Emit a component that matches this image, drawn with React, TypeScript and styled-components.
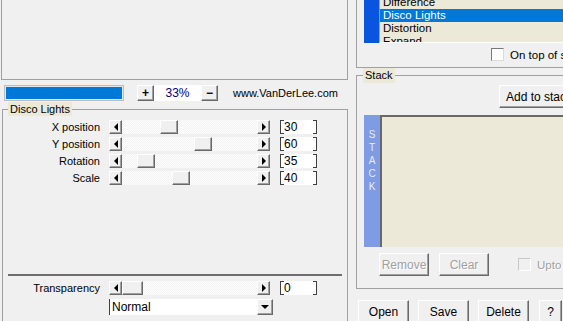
import React from 'react';
import styled, { createGlobalStyle, css } from 'styled-components';

// Windows classic palette
const colors = {
  face: '#f0f0f0',
  beige: '#ece9d8',
  line: '#a0a0a0',
  dark: '#696969',
  white: '#ffffff',
  select: '#0078d7',
  listBar: '#0a55e0',
  stackBar: '#7e9be3',
  disabled: '#a0a0a0',
  navy: '#000080'
};

const GlobalStyle = createGlobalStyle`
  html, body {
    margin: 0;
    padding: 0;
    background: ${colors.face};
    overflow: hidden;
  }
  body {
    font-family: 'Liberation Sans', Arial, sans-serif;
    font-size: 11px;
    color: #000;
  }
`;

const bevel = css`
  box-sizing: border-box;
  background: ${colors.face};
  border: 1px solid;
  border-color: ${colors.white} ${colors.dark} ${colors.dark} ${colors.white};
  box-shadow: inset -1px -1px 0 ${colors.line};
`;

const Window = styled.div`
  display: flex;
  align-items: flex-start;
  width: 620px;
  height: 321px;
  overflow: hidden;
`;

/* ---------- left side ---------- */

const LeftColumn = styled.div`
  display: flex;
  flex-direction: column;
  width: 348px;
  flex-shrink: 0;
  & > * {
    flex-shrink: 0;
  }
`;

const Preview = styled.div`
  box-sizing: border-box;
  width: 347px;
  height: 80px;
  margin-left: 1px;
  border: 1px solid ${colors.line};
  border-top: none;
`;

const Toolbar = styled.div`
  display: flex;
  align-items: center;
  height: 16px;
  margin-top: 5px;
`;

const Progress = styled.div`
  box-sizing: border-box;
  width: 120px;
  height: 16px;
  margin-left: 4px;
  padding: 1px;
  border: 1px solid #bcbcbc;
  background: #e6e6e6;
`;

const ProgressFill = styled.div`
  height: 100%;
  background: ${colors.select};
`;

const ZoomButton = styled.div<{ $gap?: number }>`
  ${bevel};
  width: 17px;
  height: 16px;
  margin-left: ${p => p.$gap ?? 0}px;
  display: flex;
  align-items: center;
  justify-content: center;
  font-weight: bold;
  font-size: 12px;
  line-height: 1;
`;

const ZoomValue = styled.div`
  width: 47px;
  height: 16px;
  line-height: 16px;
  background: ${colors.white};
  color: ${colors.navy};
  text-align: center;
  font-size: 12px;
`;

const SiteLink = styled.span`
  margin-left: 15px;
  font-size: 11px;
`;

const Group = styled.fieldset<{ $height: number; $width: number; $left?: number; $top?: number }>`
  box-sizing: border-box;
  flex-shrink: 0;
  margin: ${p => p.$top ?? 0}px 0 0 ${p => p.$left ?? 0}px;
  padding: 0;
  min-inline-size: 0;
  border: 1px solid ${colors.line};
  width: ${p => p.$width}px;
  height: ${p => p.$height}px;
`;

const GroupLabel = styled.legend<{ $offset: number; $lh: number }>`
  margin-left: ${p => p.$offset}px;
  padding: 0 2px;
  background: ${colors.beige};
  line-height: ${p => p.$lh}px;
  font-size: 11px;
`;

const Sliders = styled.div`
  display: grid;
  row-gap: 3px;
  padding-top: 4px;
`;

const SliderRow = styled.div<{ $top?: number }>`
  display: grid;
  grid-template-columns: 97px 161px 38px;
  column-gap: 9px;
  height: 14px;
  align-items: center;
  margin-top: ${p => p.$top ?? 0}px;
  & > :last-child {
    margin-left: 1px;
  }
`;

const SliderLabel = styled.span`
  text-align: right;
  line-height: 14px;
`;

const ScrollBar = styled.div`
  display: flex;
  height: 14px;
`;

const ArrowButton = styled.div`
  ${bevel};
  width: 13px;
  height: 14px;
  display: flex;
  align-items: center;
  justify-content: center;
  flex-shrink: 0;
`;

const Arrow = styled.span<{ $dir: 'left' | 'right' | 'down' }>`
  width: 0;
  height: 0;
  ${p =>
    p.$dir === 'down'
      ? css`
          border-left: 4px solid transparent;
          border-right: 4px solid transparent;
          border-top: 4px solid #000;
        `
      : css`
          border-top: 4px solid transparent;
          border-bottom: 4px solid transparent;
          border-${p.$dir === 'left' ? 'right' : 'left'}: 4px solid #000;
        `}
`;

const Track = styled.div`
  flex: 1;
  display: flex;
  background: repeating-conic-gradient(#f3f3f3 0 25%, #fdfdfd 0 50%) 0 0 / 2px 2px;
`;

const Thumb = styled.div<{ $offset: number; $width: number }>`
  ${bevel};
  width: ${p => p.$width}px;
  height: 14px;
  margin-left: ${p => p.$offset}px;
`;

const ValueField = styled.div`
  position: relative;
  box-sizing: border-box;
  height: 14px;
  line-height: 14px;
  padding-left: 3px;
  background: ${colors.white};
  border-left: 1px solid #404040;
  border-right: 1px solid #404040;
  font-size: 12px;
  &::before,
  &::after {
    content: '';
    position: absolute;
    top: 0;
    bottom: 0;
    width: 3px;
    border-top: 1px solid #404040;
    border-bottom: 1px solid #404040;
  }
  &::before {
    left: 0;
  }
  &::after {
    right: 0;
  }
`;

const Separator = styled.div`
  height: 2px;
  margin: 89px 5px 0 5px;
  background: #6d6d6d;
`;

const BlendSelect = styled.div`
  display: flex;
  box-sizing: border-box;
  width: 164px;
  height: 16px;
  margin: 4px 0 0 106px;
  background: ${colors.white};
  border-left: 1px solid #404040;
`;

const SelectText = styled.span`
  flex: 1;
  padding-left: 2px;
  line-height: 16px;
  font-size: 12px;
`;

const SelectButton = styled(ArrowButton)`
  width: 16px;
  height: 16px;
`;

/* ---------- right side ---------- */

const RightColumn = styled.div`
  display: flex;
  flex-direction: column;
  width: 240px;
  margin-left: 8px;
  flex-shrink: 0;
  & > * {
    flex-shrink: 0;
  }
`;

const FilterPanel = styled.div`
  box-sizing: border-box;
  height: 68px;
  border-left: 1px solid ${colors.line};
  border-bottom: 1px solid ${colors.line};
  display: flex;
  flex-direction: column;
`;

const ListRow = styled.div`
  display: flex;
  height: 43px;
  margin-left: 7px;
`;

const SideBar = styled.div<{ $color: string; $width: number }>`
  width: ${p => p.$width}px;
  flex-shrink: 0;
  background: ${p => p.$color};
`;

const FilterList = styled.div`
  flex: 1;
  overflow: hidden;
  background: ${colors.beige};
  border-left: 1px solid ${colors.line};
  border-bottom: 1px solid ${colors.white};
`;

const FilterItems = styled.div`
  margin-top: -4px;
`;

const FilterItem = styled.div<{ $selected?: boolean }>`
  height: 13px;
  line-height: 13px;
  padding-left: 3px;
  font-size: 11.5px;
  background: ${p => (p.$selected ? colors.select : 'transparent')};
  color: ${p => (p.$selected ? colors.white : '#000')};
`;

const CheckRow = styled.div<{ $indent: number; $top: number }>`
  display: flex;
  align-items: center;
  height: 13px;
  margin-top: ${p => p.$top}px;
  padding-left: ${p => p.$indent}px;
  white-space: nowrap;
  font-size: 11.5px;
`;

const CheckBox = styled.div<{ $disabled?: boolean }>`
  box-sizing: border-box;
  width: 13px;
  height: 13px;
  margin-right: 6px;
  flex-shrink: 0;
  background: ${p => (p.$disabled ? colors.face : colors.white)};
  border: 1px solid;
  border-color: ${p =>
    p.$disabled ? '#c8c8c8 #ffffff #ffffff #c8c8c8' : '#7a7a7a #dcdcdc #dcdcdc #7a7a7a'};
`;

const CheckText = styled.span<{ $disabled?: boolean }>`
  color: ${p => (p.$disabled ? colors.disabled : '#000')};
  text-shadow: ${p => (p.$disabled ? `1px 1px 0 ${colors.white}` : 'none')};
`;

const PushButton = styled.div<{ $width: number; $gap?: number; $disabled?: boolean }>`
  ${bevel};
  width: ${p => p.$width}px;
  height: 23px;
  margin-left: ${p => p.$gap ?? 0}px;
  flex-shrink: 0;
  display: flex;
  align-items: center;
  justify-content: center;
  font-size: 12px;
  white-space: nowrap;
  overflow: hidden;
  color: ${p => (p.$disabled ? colors.disabled : '#000')};
  text-shadow: ${p => (p.$disabled ? `1px 1px 0 ${colors.white}` : 'none')};
`;

const AddRow = styled.div`
  display: flex;
  margin: 2px 0 0 142px;
`;

const StackArea = styled.div`
  display: flex;
  height: 132px;
  margin: 7px 0 0 7px;
`;

const StackLetters = styled.div`
  display: flex;
  flex-direction: column;
  align-items: center;
  padding-top: 13px;
  color: #e8edff;
  font-size: 10px;
  line-height: 13px;
`;

const StackList = styled.div`
  flex: 1;
  background: ${colors.beige};
  border-top: 2px solid ${colors.dark};
  border-left: 2px solid ${colors.dark};
`;

const StackButtons = styled.div`
  display: flex;
  align-items: center;
  margin: 6px 0 0 22px;
`;

const BottomButtons = styled.div`
  display: flex;
  margin: 11px 0 0 2px;
`;

const sliders = [
  { label: 'X position', value: '30', offset: 38 },
  { label: 'Y position', value: '60', offset: 72 },
  { label: 'Rotation', value: '35', offset: 15 },
  { label: 'Scale', value: '40', offset: 50 }
];

const filters = ['Difference', 'Disco Lights', 'Distortion', 'Expand'];

function Slider({ offset, width = 18 }: { offset: number; width?: number }) {
  return (
    <ScrollBar>
      <ArrowButton>
        <Arrow $dir="left" />
      </ArrowButton>
      <Track>
        <Thumb $offset={offset} $width={width} />
      </Track>
      <ArrowButton>
        <Arrow $dir="right" />
      </ArrowButton>
    </ScrollBar>
  );
}

function App() {
  return (
    <Window>
      <GlobalStyle />
      <LeftColumn>
        <Preview />
        <Toolbar>
          <Progress>
            <ProgressFill />
          </Progress>
          <ZoomButton $gap={13}>+</ZoomButton>
          <ZoomValue>33%</ZoomValue>
          <ZoomButton>−</ZoomButton>
          <SiteLink>www.VanDerLee.com</SiteLink>
        </Toolbar>

        <Group $height={230} $width={346} $left={2} $top={1}>
          <GroupLabel $offset={5} $lh={14}>Disco Lights</GroupLabel>
          <Sliders>
            {sliders.map(s => (
              <SliderRow key={s.label}>
                <SliderLabel>{s.label}</SliderLabel>
                <Slider offset={s.offset} />
                <ValueField>{s.value}</ValueField>
              </SliderRow>
            ))}
          </Sliders>
          <Separator />
          <SliderRow $top={5}>
            <SliderLabel>Transparency</SliderLabel>
            <Slider offset={0} width={21} />
            <ValueField>0</ValueField>
          </SliderRow>
          <BlendSelect>
            <SelectText>Normal</SelectText>
            <SelectButton>
              <Arrow $dir="down" />
            </SelectButton>
          </BlendSelect>
        </Group>
      </LeftColumn>

      <RightColumn>
        <FilterPanel>
          <ListRow>
            <SideBar $color={colors.listBar} $width={15} />
            <FilterList>
              <FilterItems>
                {filters.map(f => (
                  <FilterItem key={f} $selected={f === 'Disco Lights'}>
                    {f}
                  </FilterItem>
                ))}
              </FilterItems>
            </FilterList>
          </ListRow>
          <CheckRow $indent={134} $top={5}>
            <CheckBox />
            <CheckText>On top of stack</CheckText>
          </CheckRow>
        </FilterPanel>

        <Group $height={221} $width={240}>
          <GroupLabel $offset={6} $lh={15}>Stack</GroupLabel>
          <AddRow>
            <PushButton $width={80}>Add to stack</PushButton>
          </AddRow>
          <StackArea>
            <SideBar $color={colors.stackBar} $width={16}>
              <StackLetters>
                {'STACK'.split('').map((c, i) => (
                  <span key={i}>{c}</span>
                ))}
              </StackLetters>
            </SideBar>
            <StackList />
          </StackArea>
          <StackButtons>
            <PushButton $width={50} $disabled>Remove</PushButton>
            <PushButton $width={50} $gap={10} $disabled>Clear</PushButton>
            <CheckRow $indent={29} $top={0}>
              <CheckBox $disabled />
              <CheckText $disabled>Upto here</CheckText>
            </CheckRow>
          </StackButtons>
        </Group>

        <BottomButtons>
          <PushButton $width={51}>Open</PushButton>
          <PushButton $width={51} $gap={9}>Save</PushButton>
          <PushButton $width={51} $gap={9}>Delete</PushButton>
          <PushButton $width={23} $gap={10}>?</PushButton>
        </BottomButtons>
      </RightColumn>
    </Window>
  );
}

export default App;
